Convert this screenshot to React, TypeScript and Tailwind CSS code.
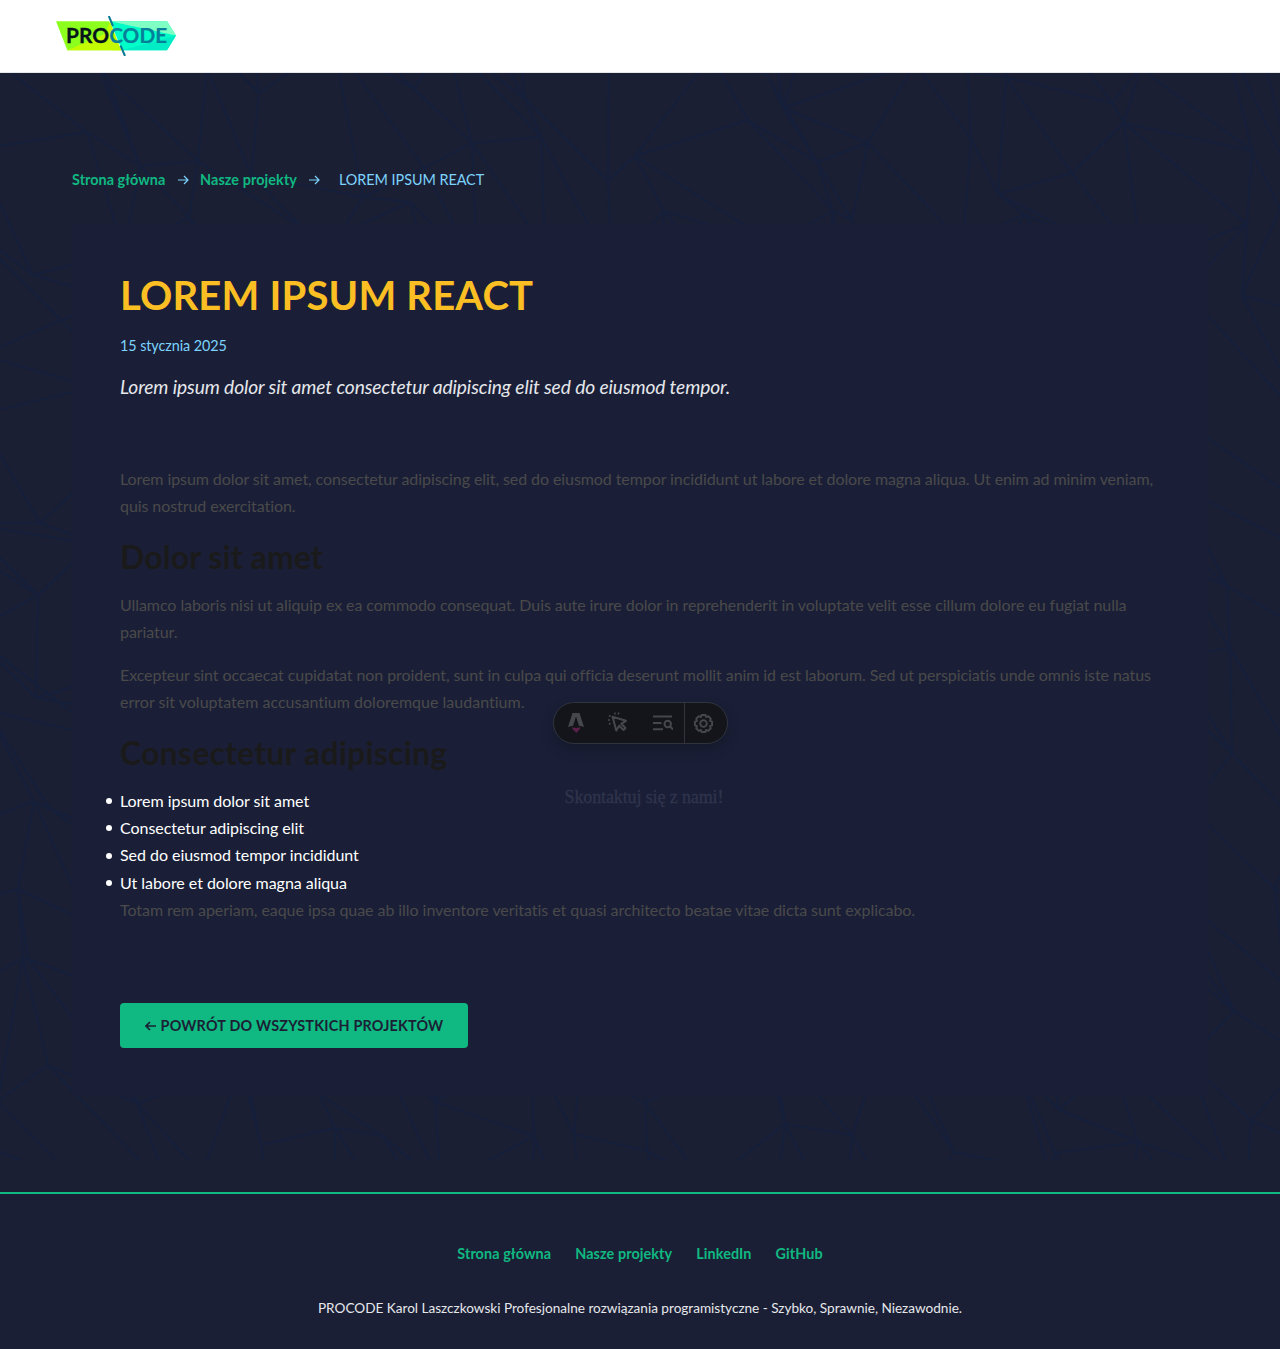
import React from 'react';

// Faint line mesh behind the page content.
const W = 1280;
const H = 1087;
const COLS = 20;
const ROWS = 14;

function node(i: number, j: number): [number, number] {
  const a = Math.sin(i * 12.9898 + j * 78.233) * 43758.5453;
  const b = Math.sin(i * 39.346 + j * 11.135) * 24634.6345;
  return [
    (i * W) / (COLS - 1) + (a - Math.floor(a) - 0.5) * 80,
    (j * H) / (ROWS - 1) + (b - Math.floor(b) - 0.5) * 80,
  ];
}

function meshPath(): string {
  let d = '';
  for (let j = -1; j < ROWS; j++) {
    for (let i = -1; i < COLS; i++) {
      const [x, y] = node(i, j);
      const next = [node(i + 1, j), node(i, j + 1), node(i + 1, j + 1)];
      next.forEach(([u, v], k) => {
        if ((i * 3 + j * 5 + k + 16) % 5 !== 0) {
          d += `M${x.toFixed(0)} ${y.toFixed(0)}L${u.toFixed(0)} ${v.toFixed(0)}`;
        }
      });
    }
  }
  return d;
}

function Mesh() {
  return (
    <svg className="absolute left-0 top-0 h-[1087px] w-full" viewBox={`0 0 ${W} ${H}`} aria-hidden="true">
      <path d={meshPath()} fill="none" stroke="#12203f" strokeOpacity="0.5" strokeWidth="2.5" />
    </svg>
  );
}

function Logo() {
  return (
    <svg width="120" height="40" viewBox="0 0 120 40" aria-label="PROCODE">
      <path d="M0 5.3H53L65 34.3H11.3Z" fill="#8cff1e" />
      <path d="M11.3 34.3 56 15 65 34.3Z" fill="#c4fb00" />
      <path d="M50 16 54 5.3 65 34.3 56 34.3Z" fill="#c4fb00" />
      <path d="M54 5.3H111L120 19.5 111 34.3H66Z" fill="#00ffc8" />
      <path d="M54 5.3H111L120 19.5Z" fill="#80ffc4" />
      <path d="M120 19.5 111 34.3H66Z" fill="#00ecc4" />
      <path d="M52.8 0 57 10M64.5 29.5 69 40" stroke="#087a93" strokeWidth="2" fill="none" />
      <g fontFamily="Lato" fontWeight="700" fontSize="21">
        <text x="10" y="27.3" textLength="43" lengthAdjust="spacingAndGlyphs" fill="#07141c" stroke="#07141c" strokeWidth="0.3">PRO</text>
        <text x="53.2" y="27.3" textLength="58" lengthAdjust="spacingAndGlyphs" fill="#087f98" stroke="#087f98" strokeWidth="0.2">CODE</text>
      </g>
    </svg>
  );
}

function Arrow({ left = false }: { left?: boolean }) {
  return (
    <svg
      className={left ? 'rotate-180' : ''}
      width="11"
      height="10"
      viewBox="0 0 11 10"
      fill="none"
      stroke="currentColor"
      strokeWidth={left ? 1.7 : 1.2}
      aria-hidden="true"
    >
      <path d="M0 5h10M6 1l4 4-4 4" />
    </svg>
  );
}

function DevToolbar() {
  return (
    <div className="absolute left-[553px] top-[702px] flex h-[42px] w-[175px] items-center rounded-full border border-[#30343d] bg-[#13151b] text-[#45474c] shadow-[0_6px_12px_rgba(18,20,30,0.45)]">
      <div className="flex h-full w-[44px] items-center justify-center">
        <svg width="16" height="20" viewBox="0 0 16 20">
          <path d="M4.500 0h7l4.500 14c-1.600-.6-3.200-1-5-1.200L8 3.500 5 12.800C3.300 13 1.600 13.400 0 14Z" fill="currentColor" />
          <path d="M4 14.300c2.600 1 5.400 1 8.200 0 .3 2.300-2.200 3.400-4 5.700C7.300 17.700 4.200 17.200 4 14.300Z" fill="#5b2049" />
        </svg>
      </div>
      <div className="flex h-full w-[39px] items-center justify-center pb-[2px]">
        <svg width="20" height="20" viewBox="0 0 20 20" fill="none" stroke="currentColor" strokeWidth="2" strokeLinejoin="round">
          <path d="m4.500 4.800 13.500 4-4.800 3 4.300 4.200-2 2-4.300-4.200L8.300 18.500Z" />
          <path d="M7 .5v2M11 .5l-1 2M0 8h2M1 12.300l1.500-1.200M1 3.500l1.500 1" strokeWidth="1.600" />
        </svg>
      </div>
      <div className="flex h-full w-[47px] items-center justify-center pl-[4px]">
        <svg width="20" height="16" viewBox="0 0 20 16" fill="none" stroke="currentColor" strokeWidth="2">
          <path d="M0 1.500h19M0 8h8.500M0 14.300h10" />
          <circle cx="14.700" cy="9" r="3.200" />
          <path d="m17 11.300 3 3.200" />
        </svg>
      </div>
      <div className="flex h-full flex-1 items-center border-l border-[#30343d] pl-[9px]">
        <svg width="19" height="19" viewBox="0 0 20 20" fill="none" stroke="currentColor" strokeWidth="2" strokeLinejoin="round">
          <path d="M8 1h4l.7 2.200 2.300-.9 2.700 2.700-.9 2.300L19 8v4l-2.200.7.900 2.300-2.700 2.700-2.300-.9L12 19H8l-.7-2.200-2.300.9L2.300 15l.9-2.300L1 12V8l2.200-.7L2.300 5 5 2.300l2.300.9Z" />
          <circle cx="10" cy="10" r="3.500" />
        </svg>
      </div>
    </div>
  );
}

const bullets = [
  'Lorem ipsum dolor sit amet',
  'Consectetur adipiscing elit',
  'Sed do eiusmod tempor incididunt',
  'Ut labore et dolore magna aliqua',
];

const footerLinks = ['Strona główna', 'Nasze projekty', 'LinkedIn', 'GitHub'];

export default function App() {
  return (
    <div className="relative flex h-[1349px] w-[1280px] flex-col overflow-hidden bg-[#1b1f34] font-['Lato',sans-serif] text-white">
      <header className="h-[73px] shrink-0 border-b border-[#e5e7eb] bg-white px-14 pt-4">
        <Logo />
      </header>

      <div className="relative h-[1119px] shrink-0">
        <Mesh />
        <main className="relative px-[72px] pt-[95px]">
          <nav className="flex h-6 items-center text-[14.4px] leading-6 text-[#7dd3fc]">
            <a className="w-[94px] whitespace-nowrap font-bold tracking-[0.05px] text-[#10b981]">Strona główna</a>
            <span className="ml-[12px] mr-[11px]"><Arrow /></span>
            <a className="w-[97px] whitespace-nowrap font-bold tracking-[0.09px] text-[#10b981]">Nasze projekty</a>
            <span className="ml-[12px] mr-[19px]"><Arrow /></span>
            <span className="tracking-[-0.04px]">LOREM IPSUM REACT</span>
          </nav>

          <article className="mt-8 h-[872px] bg-[#1a1f37] px-12 pt-[47px] text-base leading-[27.2px]">
            <h1 className="text-[40px] font-bold leading-[48px] tracking-[0.18px] text-[#fbbf24]">LOREM IPSUM REACT</h1>
            <p className="mt-[15px] text-[14.4px] leading-6 tracking-[-0.08px] text-[#7dd3fc]">15 stycznia 2025</p>
            <p className="mt-[13px] text-[19.2px] italic leading-[31px] tracking-[-0.1px] text-[#e5e7eb]">
              Lorem ipsum dolor sit amet consectetur adipiscing elit sed do eiusmod tempor.
            </p>

            <div className="mt-[62.6px] tracking-[-0.08px] text-[#4a4a4a]">
              <p>
                Lorem ipsum dolor sit amet, consectetur adipiscing elit, sed do eiusmod tempor incididunt ut labore et dolore magna aliqua. Ut enim ad minim veniam, quis nostrud exercitation.
              </p>
              <h2 className="mb-[13px] mt-[17px] text-[32px] font-bold leading-[41.6px] tracking-[0.08px] text-[#1a1a1a]">Dolor sit amet</h2>
              <p className="tracking-[-0.07px]">
                Ullamco laboris nisi ut aliquip ex ea commodo consequat. Duis aute irure dolor in reprehenderit in voluptate velit esse cillum dolore eu fugiat nulla pariatur.
              </p>
              <p className="mt-4">
                Excepteur sint occaecat cupidatat non proident, sunt in culpa qui officia deserunt mollit anim id est laborum. Sed ut perspiciatis unde omnis iste natus <span className="tracking-[0.01px]">error sit voluptatem accusantium doloremque laudantium.</span>
              </p>
              <h2 className="mb-[13px] mt-[17px] text-[32px] font-bold leading-[41.6px] tracking-[0.2px] text-[#1a1a1a]">Consectetur adipiscing</h2>
              <ul className="-ml-[14px] tracking-[-0.04px] text-white">
                {bullets.map((b) => (
                  <li key={b} className="flex items-center">
                    <span className="mr-2 mt-px h-[6px] w-[6px] rounded-full bg-white" />
                    {b}
                  </li>
                ))}
              </ul>
              <p className="tracking-[-0.055px]">Totam rem aperiam, eaque ipsa quae ab illo inventore veritatis et quasi architecto beatae vitae dicta sunt explicabo.</p>
            </div>

            <a className="mt-[80.4px] flex h-[45px] w-[348px] items-center justify-center rounded bg-[#10b981] text-[14.4px] font-bold tracking-[0.19px] text-[#1b1f35]">
              <Arrow left />
              <span className="ml-[5px]">POWRÓT DO WSZYSTKICH PROJEKTÓW</span>
            </a>
          </article>
        </main>
      </div>

      <footer className="flex-1 border-t-2 border-[#10b981] bg-[#1b1f35] pt-12 text-center">
        <nav className="flex justify-center gap-6 text-[14.4px] font-bold leading-6 tracking-[0.09px] text-[#10b981]">
          {footerLinks.map((l) => (
            <a key={l}>{l}</a>
          ))}
        </nav>
        <p className="mt-[31px] text-[13.6px] leading-[23px] tracking-[-0.01px] text-[#e5e7eb]">
          PROCODE Karol Laszczkowski Profesjonalne rozwiązania programistyczne - Szybko, Sprawnie, Niezawodnie.
        </p>
      </footer>

      <DevToolbar />
      <p className="absolute left-[564.5px] top-[785px] whitespace-nowrap font-['Liberation_Serif',serif] text-[18px] leading-6 tracking-[-0.12px] text-[#30344c] [-webkit-text-stroke:0.3px_#30344c]">
        Skontaktuj się z nami!
      </p>
    </div>
  );
}
